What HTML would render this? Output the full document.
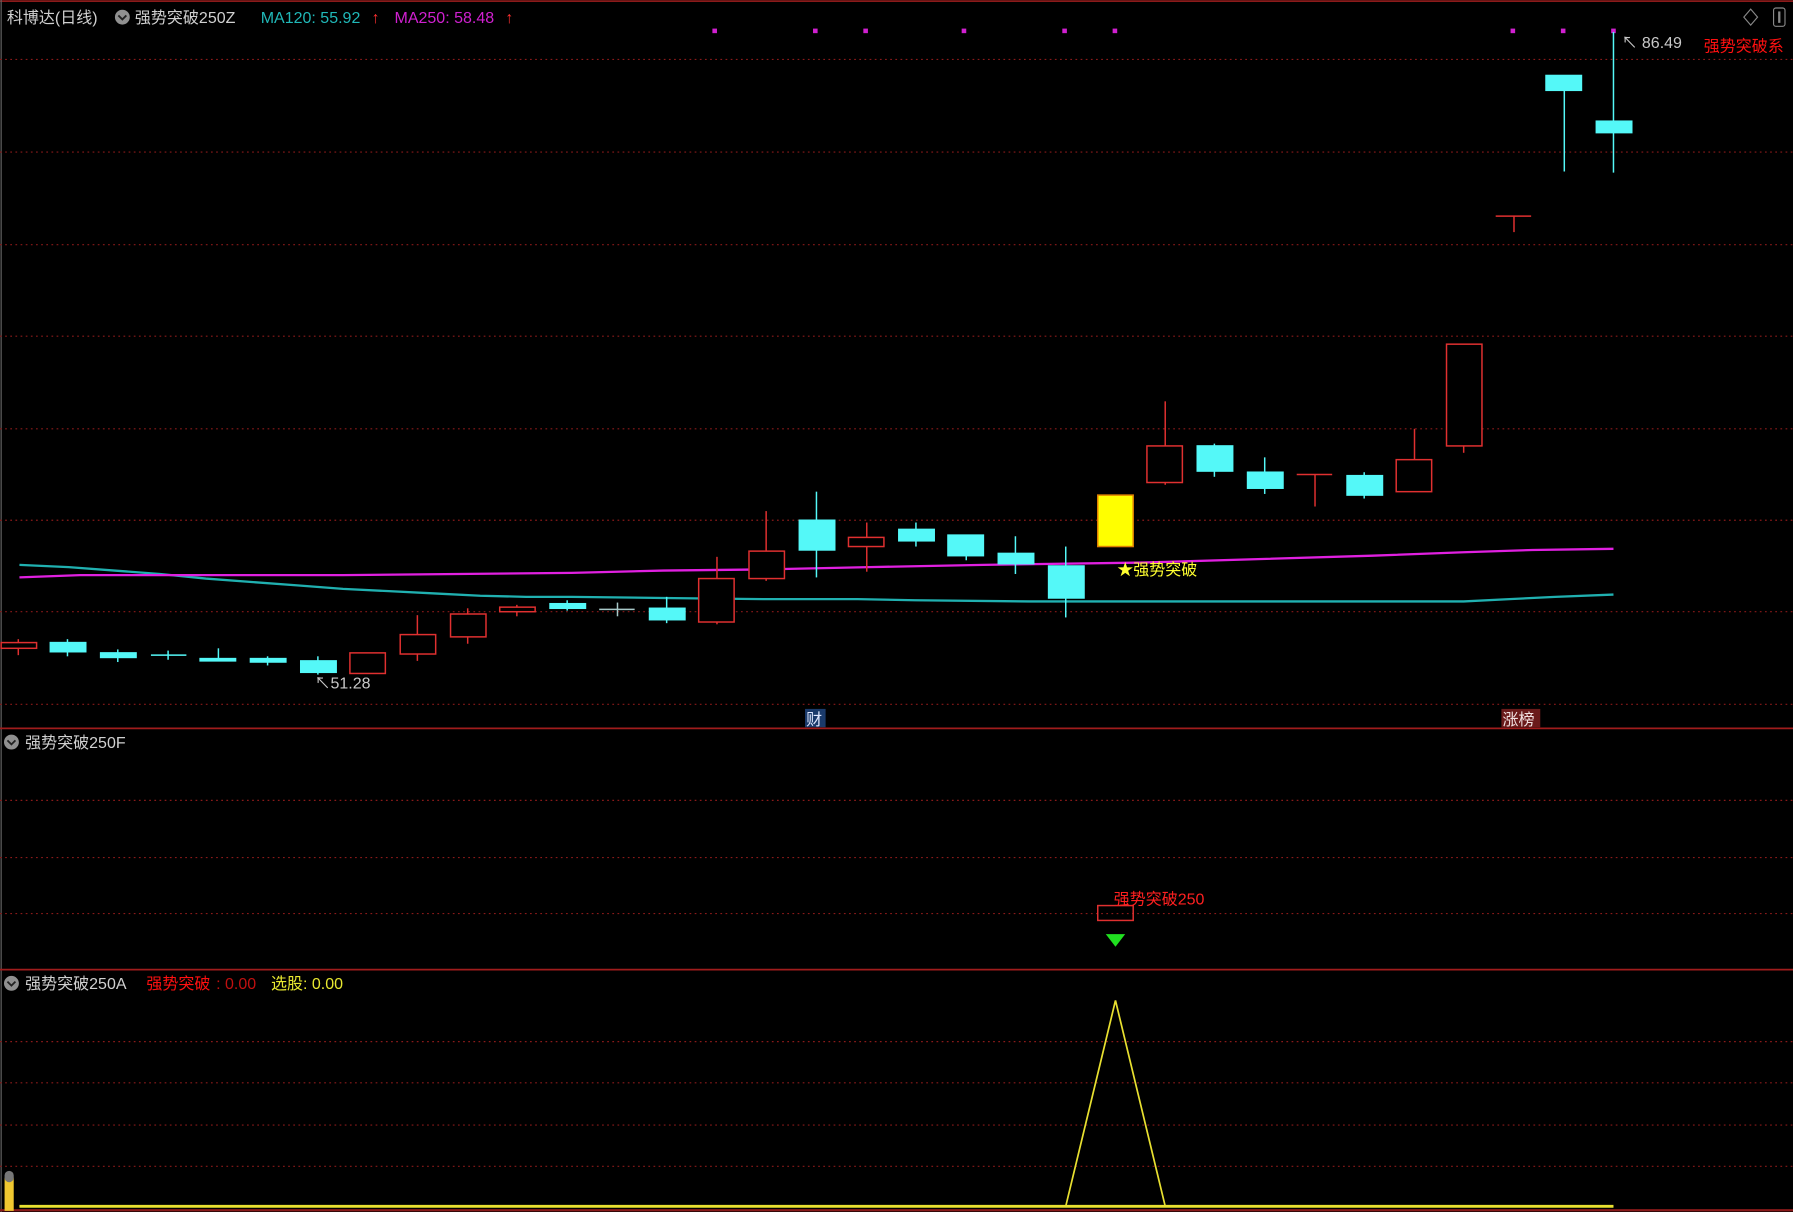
<!DOCTYPE html>
<html><head><meta charset="utf-8"><style>
html,body{margin:0;padding:0;background:#000;width:1793px;height:1212px;overflow:hidden}
svg{display:block}
text{font-family:"Liberation Sans","Noto Sans CJK SC",sans-serif;font-size:14px}
</style></head><body>
<svg width="1793" height="1212" viewBox="0 0 1568 1060" preserveAspectRatio="none" xmlns="http://www.w3.org/2000/svg">
<rect width="1568" height="1060" fill="#000"/>
<line x1="0" y1="1" x2="1568" y2="1" stroke="#8a1a1a" stroke-width="1.5"/>
<line x1="1" y1="0" x2="1" y2="1060" stroke="#666" stroke-width="1"/>
<g stroke="#8a1a1a" stroke-width="1" stroke-dasharray="1.5,3">
<line x1="0" y1="52" x2="1568" y2="52"/><line x1="0" y1="133" x2="1568" y2="133"/>
<line x1="0" y1="214" x2="1568" y2="214"/><line x1="0" y1="294" x2="1568" y2="294"/>
<line x1="0" y1="375" x2="1568" y2="375"/><line x1="0" y1="455" x2="1568" y2="455"/>
<line x1="0" y1="535" x2="1568" y2="535"/><line x1="0" y1="616" x2="1568" y2="616"/>
<line x1="0" y1="700" x2="1568" y2="700"/><line x1="0" y1="750" x2="1568" y2="750"/>
<line x1="0" y1="799" x2="1568" y2="799"/>
<line x1="0" y1="911" x2="1568" y2="911"/><line x1="0" y1="947" x2="1568" y2="947"/>
<line x1="0" y1="984" x2="1568" y2="984"/><line x1="0" y1="1020" x2="1568" y2="1020"/>
</g>
<line x1="0" y1="637" x2="1568" y2="637" stroke="#a01c1c" stroke-width="1.5"/>
<line x1="0" y1="848" x2="1568" y2="848" stroke="#a01c1c" stroke-width="1.5"/>
<line x1="0" y1="1058.5" x2="1568" y2="1058.5" stroke="#8a1a1a" stroke-width="2"/>

<!-- MA lines -->
<polyline fill="none" stroke="#20b0b0" stroke-width="2" points="17,494 60,496 100,499 140,502 180,506 220,509 260,512 300,515 340,517 380,519 420,521 460,522 500,522 580,523 670,524 750,524 800,525 900,526 1280,526 1320,524 1360,522 1411,520"/>
<polyline fill="none" stroke="#e020e0" stroke-width="2" points="17,505 70,503 150,503 300,503 400,502 500,501 580,499 670,498 760,496 860,494 1000,492 1100,489 1200,486 1280,483 1340,481 1411,480"/>

<!-- magenta dots -->
<g fill="#d020d0">
<rect x="623" y="25" width="4" height="4"/><rect x="711" y="25" width="4" height="4"/><rect x="755" y="25" width="4" height="4"/>
<rect x="841" y="25" width="4" height="4"/><rect x="929" y="25" width="4" height="4"/><rect x="973" y="25" width="4" height="4"/>
<rect x="1321" y="25" width="4" height="4"/><rect x="1365" y="25" width="4" height="4"/><rect x="1409" y="25" width="4" height="4"/>
</g>

<!-- candles -->
<g stroke-width="1.3">
<!-- red hollow -->
<g stroke="#e03030" fill="none">
<line x1="16" y1="559" x2="16" y2="573"/><rect x="1" y="562" width="31" height="5" fill="#000"/>
<rect x="306" y="571" width="31" height="18"/>
<line x1="365" y1="538" x2="365" y2="578"/><rect x="350" y="555" width="31" height="17" fill="#000"/>
<line x1="409" y1="532" x2="409" y2="563"/><rect x="394" y="537" width="31" height="20" fill="#000"/>
<line x1="452" y1="529" x2="452" y2="539"/><rect x="437" y="531" width="31" height="4" fill="#000"/>
<line x1="627" y1="487" x2="627" y2="546"/><rect x="611" y="506" width="31" height="38" fill="#000"/>
<line x1="670" y1="447" x2="670" y2="508"/><rect x="655" y="482" width="31" height="24" fill="#000"/>
<line x1="758" y1="457" x2="758" y2="500"/><rect x="742" y="470" width="31" height="8" fill="#000"/>
<line x1="1019" y1="351" x2="1019" y2="424"/><rect x="1003" y="390" width="31" height="32" fill="#000"/>
<line x1="1150" y1="415" x2="1150" y2="443"/><line x1="1134" y1="415" x2="1165" y2="415"/>
<line x1="1237" y1="375" x2="1237" y2="402"/><rect x="1221" y="402" width="31" height="28" fill="#000"/>
<line x1="1280" y1="390" x2="1280" y2="396"/><rect x="1265" y="301" width="31" height="89" fill="#000"/>
<line x1="1324" y1="189" x2="1324" y2="203"/><line x1="1308" y1="189" x2="1339" y2="189"/>
</g>
<!-- cyan -->
<g stroke="#54f8f8" fill="#54f8f8">
<line x1="59" y1="559" x2="59" y2="574"/><rect x="44" y="562" width="31" height="8"/>
<line x1="103" y1="568" x2="103" y2="579"/><rect x="88" y="571" width="31" height="4"/>
<line x1="147" y1="569" x2="147" y2="577"/><line x1="132" y1="573" x2="163" y2="573"/>
<line x1="191" y1="567" x2="191" y2="578"/><rect x="175" y="576" width="31" height="2"/>
<line x1="234" y1="574" x2="234" y2="582"/><rect x="219" y="576" width="31" height="3"/>
<line x1="278" y1="574" x2="278" y2="590"/><rect x="263" y="578" width="31" height="10"/>
<line x1="496" y1="525" x2="496" y2="534"/><rect x="481" y="528" width="31" height="4"/>
<line x1="583" y1="522" x2="583" y2="545"/><rect x="568" y="532" width="31" height="10"/>
<line x1="714" y1="430" x2="714" y2="505"/><rect x="699" y="455" width="31" height="26"/>
<line x1="801" y1="457" x2="801" y2="478"/><rect x="786" y="463" width="31" height="10"/>
<line x1="845" y1="486" x2="845" y2="490"/><rect x="829" y="468" width="31" height="18"/>
<line x1="888" y1="469" x2="888" y2="502"/><rect x="873" y="484" width="31" height="9"/>
<line x1="932" y1="478" x2="932" y2="540"/><rect x="917" y="495" width="31" height="28"/>
<line x1="1062" y1="388" x2="1062" y2="417"/><rect x="1047" y="390" width="31" height="22"/>
<line x1="1106" y1="400" x2="1106" y2="432"/><rect x="1091" y="413" width="31" height="14"/>
<line x1="1193" y1="413" x2="1193" y2="436"/><rect x="1178" y="416" width="31" height="17"/>
<line x1="1368" y1="79" x2="1368" y2="150"/><rect x="1352" y="66" width="31" height="13"/>
<line x1="1411" y1="28" x2="1411" y2="151"/><rect x="1396" y="106" width="31" height="10"/>
</g>
<line x1="540" y1="527" x2="540" y2="539" stroke="#a8c8c8"/><line x1="524" y1="533" x2="555" y2="533" stroke="#a8c8c8"/>
<rect x="960" y="433" width="31" height="45" fill="#ffff00" stroke="#e08000"/>
</g>

<!-- labels main -->
<text x="6" y="20" fill="#d0d0d0" font-size="15">科博达(日线)</text>
<circle cx="107" cy="15" r="6.5" fill="#909090"/><path d="M103.5 13.5 L107 17 L110.5 13.5" stroke="#222" stroke-width="1.6" fill="none"/>
<text x="118" y="20" fill="#d0d0d0" font-size="15">强势突破250Z</text>
<text x="228" y="20" fill="#20b8b8" font-size="14">MA120: 55.92</text>
<text x="325" y="20" fill="#ff3030" font-size="14">↑</text>
<text x="345" y="20" fill="#d020d0" font-size="14">MA250: 58.48</text>
<text x="442" y="20" fill="#ff3030" font-size="14">↑</text>
<text x="1418" y="42" fill="#c8c8c8" font-size="14">↖ 86.49</text>
<text x="1490" y="45" fill="#ff1010" font-size="16">强势突破系</text>
<path d="M1531 8 L1537 15 L1531 22 L1525 15 Z" stroke="#888" fill="none"/>
<rect x="1551" y="7" width="10" height="16" rx="2" stroke="#888" fill="none"/><rect x="1555" y="10" width="2" height="10" fill="#888"/>
<text x="275" y="602" fill="#c8c8c8" font-size="14">↖51.28</text>
<text x="977" y="503" fill="#ffff30" font-size="14">★强势突破</text>
<rect x="704" y="620" width="18" height="16" fill="#1a3a6a"/><text x="705" y="634" fill="#e0e8ff" font-size="14">财</text>
<rect x="1313" y="620" width="34" height="16" fill="#6a1a1a"/><text x="1314" y="634" fill="#f0e0e0" font-size="14">涨榜</text>

<!-- sub panel 1 -->
<circle cx="10" cy="649" r="6.5" fill="#909090"/><path d="M6.5 647.5 L10 651 L13.5 647.5" stroke="#222" stroke-width="1.6" fill="none"/>
<text x="22" y="654" fill="#d0d0d0" font-size="15">强势突破250F</text>
<rect x="960" y="792" width="31" height="13" fill="none" stroke="#e03030" stroke-width="1.3"/>
<text x="974" y="791" fill="#ff2020" font-size="14">强势突破250</text>
<path d="M967 817 L984 817 L975.5 828 Z" fill="#20e020"/>

<!-- sub panel 2 -->
<circle cx="10" cy="860" r="6.5" fill="#909090"/><path d="M6.5 858.5 L10 862 L13.5 858.5" stroke="#222" stroke-width="1.6" fill="none"/>
<text x="22" y="865" fill="#d0d0d0" font-size="15">强势突破250A</text>
<text x="128" y="865" fill="#ff1010" font-size="15">强势突破</text><text x="189" y="865" fill="#c01010" font-size="14">: 0.00</text>
<text x="237" y="865" fill="#e8e830" font-size="15">选股: 0.00</text>
<polyline fill="none" stroke="#e8e030" stroke-width="1.5" points="17,1055 932,1055 975.5,875 1019,1055 1411,1055"/>
<line x1="17" y1="1055" x2="1411" y2="1055" stroke="#e8e030" stroke-width="2.5"/>
<rect x="4" y="1030" width="8" height="29" fill="#f0c830"/>
<rect x="4" y="1024" width="8" height="10" rx="4" fill="#777"/>
</svg>
</body></html>
